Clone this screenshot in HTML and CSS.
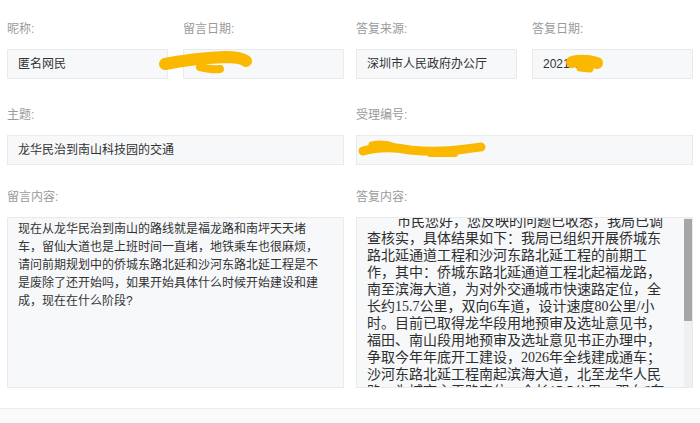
FILE: index.html
```html
<!DOCTYPE html>
<html lang="zh-CN">
<head>
<meta charset="utf-8">
<title>留言详情</title>
<link rel="stylesheet" href="styles.css">
</head>
<body>
<div class="page">
  <div class="halves row1">
    <div class="pair">
      <div class="field">
        <div class="label">昵称:</div>
        <div class="box">匿名网民</div>
      </div>
      <div class="field">
        <div class="label">留言日期:</div>
        <div class="box"></div>
      </div>
    </div>
    <div class="pair">
      <div class="field">
        <div class="label">答复来源:</div>
        <div class="box">深圳市人民政府办公厅</div>
      </div>
      <div class="field">
        <div class="label">答复日期:</div>
        <div class="box">2021-06-1</div>
      </div>
    </div>
  </div>

  <div class="halves row2">
    <div class="field">
      <div class="label">主题:</div>
      <div class="box">龙华民治到南山科技园的交通</div>
    </div>
    <div class="field">
      <div class="label">受理编号:</div>
      <div class="box"></div>
    </div>
  </div>

  <div class="halves row3">
    <div class="field">
      <div class="label">留言内容:</div>
      <div class="area">现在从龙华民治到南山的路线就是福龙路和南坪天天堵车，留仙大道也是上班时间一直堵，地铁乘车也很麻烦，请问前期规划中的侨城东路北延和沙河东路北延工程是不是废除了还开始吗，如果开始具体什么时候开始建设和建成，现在在什么阶段?</div>
    </div>
    <div class="field">
      <div class="label">答复内容:</div>
      <div class="reply">
        <div class="reply-body"><p class="reply-text">市民您好，您反映的问题已收悉，我局已调查核实，具体结果如下：我局已组织开展侨城东路北延通道工程和沙河东路北延工程的前期工作，其中：侨城东路北延通道工程北起福龙路，南至滨海大道，为对外交通城市快速路定位，全长约15.7公里，双向6车道，设计速度80公里/小时。目前已取得龙华段用地预审及选址意见书，福田、南山段用地预审及选址意见书正办理中，争取今年年底开工建设，2026年全线建成通车；沙河东路北延工程南起滨海大道，北至龙华人民路，为城市主干路定位，全长15.5公里，双向6车道，设计速度60公里/小时，目前正开展工程可行性研究，争取尽快开工建设。感谢您的关注和支持！</p></div>
        <div class="scrollbar"><div class="thumb"></div></div>
      </div>
    </div>
  </div>

  <div class="footer"></div>
</div>

<svg class="marks" width="700" height="423" viewBox="0 0 700 423">
  <g fill="none" stroke="#fbb800" stroke-linecap="round" stroke-linejoin="round">
    <path d="M165 64 C185 60 205 58 225 57 C235 57 242 58 246 61" stroke-width="12"/>
    <path d="M200 67 C208 69 214 70 220 69" stroke-width="8"/>
    <path d="M572 62 C580 60 590 61 597 63" stroke-width="12"/>
    <path d="M580 68 L590 69" stroke-width="7"/>
    <path d="M363 151 C380 146 395 147 410 150 C440 153 460 150 481 147" stroke-width="9"/>
    <path d="M372 145 C380 143 388 144 395 147" stroke-width="7"/>
    <path d="M430 154 L455 154" stroke-width="6"/>
  </g>
</svg>
</body>
</html>
```

FILE: styles.css
```css
html, body {
  margin: 0;
  padding: 0;
  background: #ffffff;
}

body {
  width: 700px;
  height: 423px;
  overflow: hidden;
  position: relative;
  font-family: "Liberation Sans", "Noto Sans CJK SC", sans-serif;
  font-size: 12px;
  color: #333333;
}

.page {
  padding: 19px 7px 0;
}

.halves {
  display: grid;
  grid-template-columns: 1fr 1fr;
  column-gap: 12px;
}

.pair {
  display: grid;
  grid-template-columns: 1fr 1fr;
  column-gap: 15px;
}

.row2 {
  margin-top: 26px;
}

.row3 {
  margin-top: 22px;
}

.label {
  height: 20px;
  line-height: 20px;
  color: #9a9a9a;
  margin-bottom: 10px;
}

.box {
  box-sizing: border-box;
  height: 30px;
  line-height: 28px;
  padding: 0 10px;
  background: #f7f8fa;
  border: 1px solid #e9eaec;
  white-space: nowrap;
  overflow: hidden;
}

.area {
  box-sizing: border-box;
  height: 171px;
  background: #f7f8fa;
  border: 1px solid #e9eaec;
  padding: 2px 22px 0 10px;
  line-height: 18px;
  overflow: hidden;
}

.reply {
  box-sizing: border-box;
  height: 171px;
  background: #f7f8fa;
  border: 1px solid #e9eaec;
  display: flex;
  overflow: hidden;
}

.reply-body {
  flex: 1;
  min-width: 0;
  padding: 0 19px 0 10px;
  overflow: hidden;
  font-family: "Liberation Serif", "Noto Sans CJK SC", serif;
  font-size: 14px;
  line-height: 17px;
  color: #2e2e2e;
}

.reply-text {
  margin: -5px 0 0;
  text-indent: 30px;
}

.scrollbar {
  width: 8px;
  flex: none;
  background: #f0f0f0;
  padding-top: 1px;
}

.thumb {
  height: 102px;
  background: #a6a6a6;
}

.footer {
  margin: 20px -7px 0;
  height: 20px;
  border-top: 1px solid #ececec;
  background: #fafafa;
}

.marks {
  position: absolute;
  left: 0;
  top: 0;
  pointer-events: none;
}
```
